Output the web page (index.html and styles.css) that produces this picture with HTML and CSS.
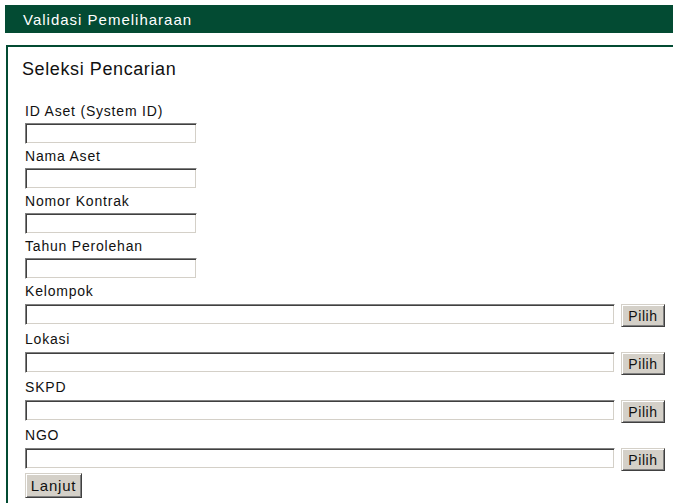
FILE: index.html
```html
<!DOCTYPE html>
<html>
<head>
<meta charset="utf-8">
<title>Validasi Pemeliharaan</title>
<link rel="stylesheet" href="styles.css">
</head>
<body>
<div class="header">Validasi Pemeliharaan</div>
<div class="panel">
  <div class="title">Seleksi Pencarian</div>
  <form class="form">
    <div class="label">ID Aset (System ID)</div>
    <input class="field small" type="text">
    <div class="label">Nama Aset</div>
    <input class="field small" type="text">
    <div class="label">Nomor Kontrak</div>
    <input class="field small" type="text">
    <div class="label">Tahun Perolehan</div>
    <input class="field small" type="text">
    <div class="label">Kelompok</div>
    <div class="row"><input class="field wide" type="text"><button class="btn pick" type="button">Pilih</button></div>
    <div class="label">Lokasi</div>
    <div class="row"><input class="field wide" type="text"><button class="btn pick" type="button">Pilih</button></div>
    <div class="label">SKPD</div>
    <div class="row"><input class="field wide" type="text"><button class="btn pick" type="button">Pilih</button></div>
    <div class="label">NGO</div>
    <div class="row"><input class="field wide" type="text"><button class="btn pick" type="button">Pilih</button></div>
    <button class="btn next" type="button">Lanjut</button>
  </form>
</div>
</body>
</html>
```

FILE: styles.css
```css
html, body {
  margin: 0;
  padding: 0;
  background: #ffffff;
}
body {
  padding: 5px 2px 0 5px;
  font-family: "Liberation Sans", Arial, sans-serif;
  color: #111111;
}
.header {
  width: 668px;
  height: 28px;
  box-sizing: border-box;
  background: #034b33;
  color: #ffffff;
  font-size: 15px;
  letter-spacing: 1px;
  line-height: 28px;
  padding: 1px 0 0 18px;
}
.panel {
  margin: 12px 0 0 1px;
  width: 667px;
  box-sizing: border-box;
  border-top: 2px solid #034b33;
  border-left: 2px solid #034b33;
  padding: 12px 0 20px 14px;
}
.title {
  font-size: 18px;
  letter-spacing: 0.6px;
  line-height: 20px;
  margin-bottom: 20px;
}
.form {
  margin: 0 0 0 3px;
  display: flex;
  flex-direction: column;
  align-items: flex-start;
}
.label {
  font-size: 14px;
  letter-spacing: 0.8px;
  line-height: 24px;
  height: 24px;
}
.field {
  display: block;
  box-sizing: border-box;
  height: 21px;
  margin: 0;
  padding: 0 2px;
  background: #ffffff;
  border-style: solid;
  border-width: 1px;
  border-color: #808080 #ffffff #ffffff #808080;
  box-shadow: inset 1px 1px 0 #404040, inset -1px -1px 0 #d4d0c8;
  font-family: "Liberation Sans", Arial, sans-serif;
  font-size: 13px;
  outline: none;
}
.small {
  width: 172px;
}
.wide {
  width: 590px;
}
.row {
  display: flex;
  align-items: flex-start;
  gap: 6px;
  height: 24px;
  margin-top: 1px;
  margin-bottom: -1px;
}
.btn {
  box-sizing: border-box;
  height: 23px;
  margin: 0;
  padding: 0;
  background: #d4d0c8;
  color: #111111;
  font-family: "Liberation Sans", Arial, sans-serif;
  font-size: 14px;
  letter-spacing: 0.6px;
  border-style: solid;
  border-width: 1px;
  border-color: #d4d0c8 #404040 #404040 #d4d0c8;
  box-shadow: inset 1px 1px 0 #ffffff, inset -1px -1px 0 #808080;
  cursor: default;
}
.pick {
  width: 44px;
}
.next {
  width: 57px;
  height: 25px;
  margin-top: 2px;
  font-size: 15px;
  letter-spacing: 0.8px;
}
```
